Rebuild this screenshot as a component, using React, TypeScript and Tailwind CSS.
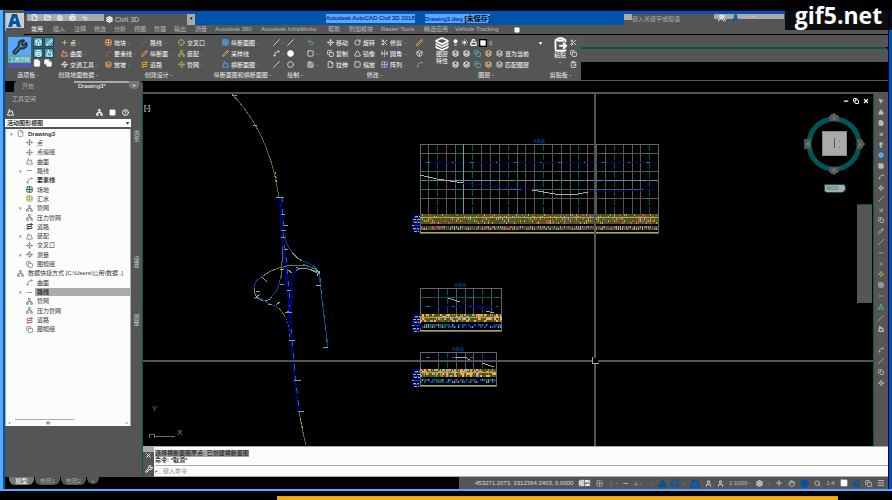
import {useState} from 'react';
import {
	ArrowDownRight, Box, Circle, CircleHelp, ClipboardPaste, Copy, Crosshair, Eraser, File, FlipHorizontal2, FolderOpen,
	Grid2x2, Hand, Layers, Lightbulb, LockOpen, Menu, Minus, Mountain, Move, MousePointer2, Network, Pencil, Plus, Printer,
	Route, RotateCw, Save, Scissors, Search, Settings, Slash, Spline, Square, Sun, Table, Triangle, Undo2, Users, User,
	Waypoints, Wrench, X,
} from 'lucide-react';

import type {LucideIcon} from 'lucide-react';

type Tool = {
	icon: LucideIcon;
	label?: string;
	caret?: boolean;
	tint?: string;
};

const menuTabs = [
	{label: '常用', width: 'w-[22px]'},
	{label: '插入', width: 'w-[21px]'},
	{label: '注释', width: 'w-[20px]'},
	{label: '修改', width: 'w-[20px]'},
	{label: '分析', width: 'w-[20px]'},
	{label: '视图', width: 'w-[20px]'},
	{label: '管理', width: 'w-[20px]'},
	{label: '输出', width: 'w-[21px]'},
	{label: '测量', width: 'w-[20px]'},
	{label: 'Autodesk 360', width: 'w-[46px]'},
	{label: 'Autodesk InfraWorks', width: 'w-[67px]'},
	{label: '帮助', width: 'w-[21px]'},
	{label: '附加模块', width: 'w-[32px]'},
	{label: 'Raster Tools', width: 'w-[43px]'},
	{label: '精选应用', width: 'w-[31px]'},
	{label: 'Vehicle Tracking', width: 'w-[59px]'},
];

const groundTools: Tool[] = [
	{icon: Plus, label: '点', caret: true, tint: 'text-[#ffaa55]'},
	{icon: Mountain, label: '曲面', caret: true, tint: 'text-[#ffaa55]'},
	{icon: Waypoints, label: '交通工具', caret: true},
];

const parcelTools: Tool[] = [
	{icon: Grid2x2, label: '地块', caret: true, tint: 'text-[#ffaa55]'},
	{icon: Spline, label: '要素线', caret: true, tint: 'text-[#aa5555]'},
	{icon: Layers, label: '放坡', caret: true, tint: 'text-[#ffaa55]'},
];

const alignmentTools: Tool[] = [
	{icon: Slash, label: '路线', caret: true, tint: 'text-[#aa5555]'},
	{icon: Pencil, label: '纵断面', caret: true, tint: 'text-[#ffaa55]'},
	{icon: Route, label: '道路', tint: 'text-[#ffaa00]'},
];

const assemblyTools: Tool[] = [
	{icon: Crosshair, label: '交叉口', caret: true, tint: 'text-[#aaaa55]'},
	{icon: Network, label: '装配', caret: true, tint: 'text-[#aaaa55]'},
	{icon: Waypoints, label: '管网', caret: true, tint: 'text-[#aaaa55]'},
];

const sectionTools: Tool[] = [
	{icon: Table, label: '纵断面图', caret: true, tint: 'text-[#55aaff]'},
	{icon: Pencil, label: '采样线', tint: 'text-[#ffaa55]'},
	{icon: Mountain, label: '横断面图', caret: true, tint: 'text-[#55aaff]'},
];

const moveTools: Tool[] = [
	{icon: Move, label: '移动'},
	{icon: Copy, label: '复制'},
	{icon: File, label: '拉伸'},
];

const rotateTools: Tool[] = [
	{icon: RotateCw, label: '旋转'},
	{icon: Triangle, label: '镜像'},
	{icon: Square, label: '缩放'},
];

const trimTools: Tool[] = [
	{icon: Scissors, label: '修剪', caret: true},
	{icon: FlipHorizontal2, label: '圆角', caret: true},
	{icon: Grid2x2, label: '阵列', caret: true, tint: 'text-[#aaaaff]'},
];

const eraseTools: Tool[] = [
	{icon: Pencil, tint: 'text-[#ffaa55]'},
	{icon: Box},
	{icon: Spline, tint: 'text-[#55aaaa]'},
];

const treeItems = [
	{label: 'Drawing3', level: 0, icon: File, open: true, bold: true},
	{label: '点', level: 1, icon: Move},
	{label: '点编组', level: 1, icon: Move},
	{label: '曲面', level: 1, icon: Mountain},
	{label: '路线', level: 1, icon: Minus, open: true},
	{label: '要素线', level: 1, icon: Spline, bold: true},
	{label: '场地', level: 1, icon: Grid2x2, tint: 'text-[#005555]'},
	{label: '汇水', level: 1, icon: Table, tint: 'text-[#aaaa55]'},
	{label: '管网', level: 1, icon: Network, open: true},
	{label: '压力管网', level: 1, icon: Network},
	{label: '道路', level: 1, icon: Route, tint: 'text-[#222222]'},
	{label: '装配', level: 1, icon: Mountain, open: true},
	{label: '交叉口', level: 1, icon: Move},
	{label: '测量', level: 1, icon: Waypoints, open: true},
	{label: '图幅组', level: 1, icon: Copy},
	{label: '数据快捷方式 [C:\\Users\\公用\\数据..]', level: 0, icon: Network},
	{label: '曲面', level: 1, icon: Spline},
	{label: '路线', level: 1, icon: Minus, open: true},
	{label: '管网', level: 1, icon: Network},
	{label: '压力管网', level: 1, icon: Network},
	{label: '道路', level: 1, icon: Route, tint: 'text-[#aa5555]'},
	{label: '图幅组', level: 1, icon: Copy},
];

const selectedRow = 17;

const sideTools: Array<{icon: LucideIcon; tint?: string}> = [
	{icon: MousePointer2}, {icon: Triangle}, {icon: File}, {icon: ArrowDownRight}, {icon: Lightbulb},
	{icon: Box, tint: 'text-[#55aaff]'}, {icon: Square}, {icon: Spline}, {icon: Waypoints}, {icon: Slash},
	{icon: ArrowDownRight}, {icon: Copy}, {icon: Pencil, tint: 'text-[#ffaa55]'}, {icon: Slash}, {icon: Minus},
	{icon: Plus, tint: 'text-[#aaaa55]'}, {icon: Waypoints, tint: 'text-[#aaaa55]'}, {icon: Table}, {icon: Minus},
	{icon: Network, tint: 'text-[#55aaaa]'}, {icon: Slash}, {icon: Mountain, tint: 'text-white'}, {icon: Minus, tint: 'text-[#aa5555]'},
	{icon: Spline}, {icon: Slash}, {icon: Copy}, {icon: Waypoints},
];

const bandColors = ['#aaaa55', '#aaaaaa', '#555555', '#aa5555', '#555555', '#555500'];
const blueBandColors = ['#0055aa', '#555555', '#55aaaa', '#000055', '#005555', '#000055'];
const warmBandColors = ['#aaaa55', '#555555', '#aaaa55', '#aa5555', '#aaaaaa', '#ffaa55'];

// Small deterministic generator, so the bands look the same on each render
function noise(seed: number) {
	const value = Math.sin(seed * 12.9898) * 43758.5453;
	return value - Math.floor(value);
}

function ToolButton({icon: Icon, label, caret, tint = 'text-[#dddddd]'}: Tool) {
	return (
		<button type="button" aria-label={label ?? 'tool'} className="flex h-[11px] items-center gap-0.5 whitespace-nowrap text-white">
			<Icon size={7} strokeWidth={3} className={`shrink-0 ${tint}`}/>
			{label && <span>{label}</span>}
			{caret && <span className="text-[#aaaaaa]">-</span>}
		</button>
	);
}

function ToolColumn({tools, width}: {tools: Tool[]; width: string}) {
	return (
		<div className={`flex shrink-0 flex-col ${width}`}>
			{tools.map((tool, i) => <ToolButton key={i} {...tool}/>)}
		</div>
	);
}

function Panel({title, width, children}: {title: string; width: string; children: React.ReactNode}) {
	return (
		<section className={`flex shrink-0 flex-col ${width}`}>
			<div className="flex h-[35px] items-start pt-0.5">{children}</div>
			<button type="button" className="flex h-[10px] justify-center whitespace-nowrap pr-2.5 leading-[10px] text-[#eeeeee]">{title} -</button>
		</section>
	);
}

function Header() {
	return (
		<header className="flex shrink-0 bg-[#555555]">
			<button type="button" aria-label="应用程序菜单" className="mt-[3px] flex h-[18px] w-[19px] shrink-0 items-center justify-center bg-[#aaaaaa]">
				<svg viewBox="0 0 18 18" className="h-[18px] w-[18px]">
					<path d="M0 0h18v15H0z" fill="#cccccc"/>
					<path d="M0 15h18v3H0z" fill="#555555"/>
					<path d="M2 14 6 1h5l4 13h-4l-1-3H7l-1 3zM7 8h3L9 4z" fill="#0055aa" fillRule="evenodd"/>
				</svg>
			</button>
			<div className="flex min-w-0 flex-1 flex-col">
				<div className="flex h-[15px] justify-between border-t border-[#000055] bg-[#0055aa]">
					<div className="flex h-[14px] w-[302px] shrink-0 pt-[3px]">
						<div className="flex h-[11px] w-[80px] shrink-0 items-start bg-[#555555] pl-[3px]">
							<div className="flex h-[7px] flex-1 items-center gap-1.5 bg-[#aaaaaa] pl-1 text-white">
								<File size={7} strokeWidth={3}/>
								<FolderOpen size={7} strokeWidth={3}/>
								<Save size={6} strokeWidth={3}/>
								<Printer size={7} strokeWidth={3}/>
								<Undo2 size={6} strokeWidth={3}/>
							</div>
						</div>
						<button type="button" className="flex h-[11px] w-[83px] shrink-0 items-center gap-0.5 bg-[#555555] pl-0.5 text-[7px] text-[#cccccc]">
							<Settings size={7} strokeWidth={4} className="text-white"/>
							Civil 3D
						</button>
						<div className="h-[11px] w-2 shrink-0 bg-[#aaaaaa] text-center text-[5px] text-black">▾</div>
					</div>
					<h1 className="flex shrink-0 items-center gap-2.5 text-[#000055]">
						<span className="h-[9px] bg-[#55aaff] leading-[9px]">Autodesk AutoCAD Civil 3D 2018</span>
						<span className="h-[9px] bg-[#55aaff] leading-[9px]">Drawing3.dwg <b className="text-[7px] text-black">[未保存]</b></span>
					</h1>
					<div className="flex min-w-0 flex-1 justify-end pt-[3px]">
						<div className="flex h-[11px] w-[90px] shrink-0 bg-[#555555]">
							<div className="h-[6px] w-2 bg-[#aaaaaa]"/>
							<input aria-label="搜索" placeholder="键入关键字或短语" className="h-[9px] min-w-0 flex-1 bg-[#555555] text-[6px] outline-none placeholder:text-[#aaaaaa]"/>
						</div>
						<div className="flex h-[11px] w-[174px] shrink-0 bg-[#555555]">
							<div className="flex h-[5px] w-[70px] gap-1.5 bg-[#aaaaaa] pl-1">
								<Users size={8} strokeWidth={3} className="text-white"/>
								<User size={7} strokeWidth={5} className="text-[#0055aa]"/>
								<span className="leading-[4px] text-white">· · -</span>
							</div>
						</div>
					</div>
				</div>
				<nav className="flex h-[10px] items-center border-b border-black pl-[7px] leading-[9px] text-[#bbbbbb]">
					{menuTabs.map((tab, i) => (
						<button
							key={tab.label}
							type="button"
							className={`h-[9px] shrink-0 whitespace-nowrap text-left leading-[9px] ${tab.width} ${i === 0 ? 'text-white' : ''}`}
						>
							{tab.label}
						</button>
					))}
					<Square size={6} fill="white" className="text-white"/>
				</nav>
			</div>
		</header>
	);
}

function Ribbon() {
	return (
		<div className="flex h-[46px] shrink-0 border-b border-[#555555] bg-black">
			<div className="flex shrink-0 bg-[#555555]">
				<Panel title="选项板" width="w-[56px]">
					<button type="button" className="ml-[3px] flex h-[31px] w-[23px] shrink-0 flex-col items-center bg-[#55aaff] pt-0.5 leading-[8px] text-white">
						<Wrench size={16} strokeWidth={3} className="shrink-0 text-[#333333]"/>
						<span className="w-full whitespace-nowrap bg-[#55aaaa] text-[5px]">工具空间</span>
						<span className="min-h-0 w-full flex-1 bg-[#5555aa]"/>
					</button>
					<div className="ml-[2px] grid grid-cols-2 gap-px">
						{[Box, Pencil, Printer, Mountain].map((Icon, i) => (
							<button key={i} type="button" aria-label="面板" className="flex h-[10px] w-[10px] items-center justify-center border border-[#005555] bg-[#5599bb] text-white">
								<Icon size={7} strokeWidth={3}/>
							</button>
						))}
						<File size={8} fill="white" className="text-white"/>
						<Copy size={8} fill="white" className="text-white"/>
					</div>
				</Panel>
				<Panel title="创建地面数据" width="w-[44px]">
					<ToolColumn tools={groundTools} width="w-[44px]"/>
				</Panel>
				<Panel title="创建设计" width="w-[117px]">
					<ToolColumn tools={parcelTools} width="w-[36px]"/>
					<ToolColumn tools={alignmentTools} width="w-[37px]"/>
					<ToolColumn tools={assemblyTools} width="w-[44px]"/>
				</Panel>
				<Panel title="纵断面图和横断面图" width="w-[51px]">
					<ToolColumn tools={sectionTools} width="w-[51px]"/>
				</Panel>
				<Panel title="绘制" width="w-[54px]">
					<ToolColumn tools={[{icon: Slash, caret: true}, {icon: Spline, caret: true}, {icon: Slash, caret: true}]} width="w-[14px]"/>
					<ToolColumn tools={[{icon: Slash}, {icon: Circle, tint: 'fill-white text-white'}, {icon: Circle}]} width="w-[20px]"/>
					<ToolColumn tools={[{icon: Undo2, tint: 'text-[#55aaaa]'}, {icon: Square, caret: true}, {icon: Save, caret: true}]} width="w-[20px]"/>
				</Panel>
				<Panel title="修改" width="w-[105px]">
					<ToolColumn tools={moveTools} width="w-[27px]"/>
					<ToolColumn tools={rotateTools} width="w-[27px]"/>
					<ToolColumn tools={trimTools} width="w-[35px]"/>
					<ToolColumn tools={eraseTools} width="w-[16px]"/>
				</Panel>
				<Panel title="图层" width="w-[118px]">
					<button type="button" className="flex w-[20px] shrink-0 flex-col items-center leading-[7px] text-white">
						<Layers size={14} strokeWidth={3}/>
						<span>图层</span>
						<span>特性</span>
					</button>
					<div className="flex flex-1 flex-col">
						<div className="flex h-[11px] items-center gap-0.5 pr-2 text-white">
							<Lightbulb size={7} fill="white"/>
							<Sun size={7} fill="white"/>
							<LockOpen size={7} strokeWidth={4}/>
							<Square size={8} fill="white" className="border border-black"/>
							<select aria-label="图层" className="flex-1 appearance-none bg-transparent text-[#cccccc]">
								<option>0</option>
							</select>
							<span>▾</span>
						</div>
						{['置为当前', '匹配图层'].map(label => (
							<div key={label} className="flex h-[11px] items-center gap-1 text-white">
								<Layers size={7} strokeWidth={3}/>
								<Layers size={7} strokeWidth={3}/>
								<Copy size={7} strokeWidth={3} className="text-[#55aaaa]"/>
								<Layers size={7} strokeWidth={3} className="text-[#ffcc88]"/>
								<ToolButton icon={Layers} label={label}/>
							</div>
						))}
					</div>
				</Panel>
				<Panel title="剪贴板" width="w-[31px]">
					<button type="button" className="flex w-[20px] shrink-0 flex-col items-center leading-[7px] text-white">
						<ClipboardPaste size={15} strokeWidth={3}/>
						<span>粘贴</span>
						<span>-</span>
					</button>
					<ToolColumn tools={[{icon: Scissors}, {icon: Copy}, {icon: ClipboardPaste}]} width="w-[10px]"/>
				</Panel>
			</div>
			<div className="flex min-w-0 flex-1 flex-col">
				<div className="h-[12px] bg-[#555555]"/>
				<div className="h-[15px] rounded-tr border-t-2 border-[#005555] bg-[#555555]"/>
			</div>
		</div>
	);
}

function DocumentTabs() {
	return (
		<div className="flex h-[11px] shrink-0 items-stretch bg-black">
			<div className="ml-[9px] h-full w-[60px] rounded-tl bg-[#555555] pl-2">
				<button type="button" className="block leading-[11px] text-[#aaaaaa]">开始</button>
			</div>
			<div className="flex w-[69px] rounded-tr bg-[#555555]">
				<button type="button" className="h-[8px] w-[55px] border-t-2 border-[#aaaaaa] pl-1 text-left leading-[7px] text-white">Drawing3*</button>
				<button type="button" aria-label="新图形" className="h-[8px] w-[10px] rounded-b bg-[#777777] leading-[7px] text-white">+</button>
			</div>
		</div>
	);
}

function Toolspace() {
	const [selected, setSelected] = useState(selectedRow);

	return (
		<aside className="flex w-[138px] shrink-0 border-r border-[#005555] bg-[#555555]">
			<div className="flex w-[126px] shrink-0 flex-col">
				<h2 className="mt-0.5 h-[11px] pl-[7px] leading-[11px] text-[#bbbbbb]">工具空间</h2>
				<div className="flex h-[14px] items-center gap-[6px] px-0.5 text-white">
					<Mountain size={7} strokeWidth={3} className="mr-auto"/>
					<Network size={7} strokeWidth={3}/>
					<Square size={7} fill="white"/>
					<CircleHelp size={7} strokeWidth={3}/>
				</div>
				<div className="flex h-[8px] shrink-0 items-center bg-white pr-0.5 text-[#333333]">
					<select aria-label="视图" className="h-[8px] min-w-0 flex-1 appearance-none bg-white pl-0.5 text-[6px] font-bold leading-[8px]">
						<option>活动图形视图</option>
					</select>
					<span>▾</span>
				</div>
				<div className="mt-0.5 flex h-[297px] flex-col border-x border-[#aaaaaa] bg-[#fcfcfc] text-[#333333]">
					<ul className="grid h-[205px] auto-rows-fr grid-cols-1">
						{treeItems.map(({label, level, icon: Icon, open, bold, tint}, i) => (
							<li key={i} className={`flex min-w-0 items-center ${level === 0 ? 'pl-1' : 'pl-[13px]'}`}>
								<span className="w-[7px] shrink-0 text-[5px] text-[#888888]">{open ? '▾' : ''}</span>
								<Icon size={7} strokeWidth={3} className={`shrink-0 ${tint ?? 'text-[#888888]'}`}/>
								<button
									type="button"
									className={`ml-0.5 h-[8px] min-w-0 flex-1 whitespace-nowrap pl-0.5 text-left leading-[8px] ${i === selected ? 'bg-[#aaaaaa] font-bold' : ''} ${bold ? 'font-bold' : ''}`}
									onClick={() => {
										setSelected(i);
									}}
								>
									{label}
								</button>
							</li>
						))}
					</ul>
					<div className="ml-[9px] mt-auto h-px w-[59px] bg-[#aaaaaa]"/>
					<div className="flex h-[6px] items-center justify-between px-0.5 text-[4px] text-[#888888]">
						<span>◂</span>
						<span className="mr-[40px]">▮▮</span>
						<span>▸</span>
					</div>
				</div>
			</div>
			<div className="flex flex-1 flex-col items-center text-[6px] leading-[6px] text-[#cccccc]">
				<button type="button" className="mt-[37px] h-[13px] w-[6px]">浏览</button>
				<button type="button" className="mt-[113px] h-[13px] w-[6px]">设置</button>
				<button type="button" className="mt-[45px] h-[13px] w-[6px]">测量</button>
			</div>
		</aside>
	);
}

type ProfileProps = {
	x: number;
	top: number;
	bands: number;
	width: number;
	columns: number[];
	rows: Array<{y: number; color: string}>;
	upper: string[];
	lower: string[];
	upperHeight: number;
};

function ProfileView({x, top, bands, width, columns, rows, upper, lower, upperHeight}: ProfileProps) {
	const lowerTop = bands + upperHeight + 2;
	const cells = [];
	for (let row = 0; row < upperHeight; row += 2) {
		for (let col = 0; col < width; col += 2) {
			const pick = noise((col * 7) + (row * 131) + top);
			if (pick > 0.15) {
				cells.push(<rect key={`u${row}-${col}`} x={x + col} y={bands + row} width={pick > 0.6 ? 2 : 1} height="2" fill={upper[Math.floor(pick * upper.length)]}/>);
			}
		}
	}

	for (let row = 0; row < 4; row += 2) {
		for (let col = 0; col < width; col += 2) {
			const pick = noise((col * 5) + (row * 57) + bands);
			cells.push(<rect key={`l${row}-${col}`} x={x + col} y={lowerTop + row} width={pick > 0.5 ? 2 : 1} height="2" fill={lower[Math.floor(pick * lower.length)]}/>);
		}
	}

	return (
		<g>
			<text x={x + (width / 2)} y={top - 1} textAnchor="middle" fontSize="4" fill="#0055aa">纵断面</text>
			{columns.map((column, i) => (
				<path
					key={column}
					d={`M${column} ${top}V${bands}`}
					stroke={i % 4 === 1 ? '#005555' : '#555555'}
					strokeDasharray={i % 4 === 1 ? '7 2' : undefined}
				/>
			))}
			{rows.map(row => (
				<g key={row.y}>
					<path d={`M${x} ${row.y}H${x + width}`} stroke={row.color}/>
					<path d={`M${x + 6} ${row.y}H${x + width}`} stroke="#008888" strokeDasharray="4 22 2 16"/>
				</g>
			))}
			<path d={`M${x} ${top}H${x + width}V${lowerTop + 7}H${x}Z`} fill="none" stroke="#666666"/>
			<rect x={x} y={bands} width={width} height={upperHeight} fill="#555500"/>
			<rect x={x} y={lowerTop} width={width} height="4" fill="#333333"/>
			{cells}
			<path d={`M${x} ${bands + 3}H${x + width}M${x} ${lowerTop + 6}H${x + width}`} stroke="#aaaa55"/>
			<rect x={x - 8} y={bands} width="8" height={lowerTop + 7 - bands} fill="#000055"/>
			<path d={`M${x - 5} ${bands + 2}h5m-7 3h7m-6 3h6m-8 3h7m-6 3h6m-5 3h5`} stroke="#aaaaaa" strokeDasharray="3 1"/>
			<path d={`M${x - 6} ${bands + 3}h6m-7 4h6m-5 4h6m-7 4h6`} stroke="#0055aa"/>
		</g>
	);
}

const mainColumns = Array.from({length: 26}, (_, i) => Math.round(428 + (i * 8.85)));

function Drawing() {
	return (
		<svg viewBox="143 94 730 352" className="h-[352px] w-[730px] max-w-none shrink-0" fill="none" strokeWidth="1" shapeRendering="crispEdges">
			<g strokeWidth="1">
				<path d="M232 94Q265 129 275 177L279 197M299 412Q302 430 306 445" stroke="#66661a"/>
				<path d="M232 94l5 5M275 172l2 10M300 418l3 12" stroke="#aaaa55" strokeDasharray="2 2"/>
				<path d="M281 197L283 237L288 290L291 340L295 380L299 412" stroke="#000077" strokeWidth="2"/>
				<path d="M282 197L284 237L289 290L292 340L296 380L299 412" stroke="#0077aa" strokeDasharray="5 7"/>
				<path d="M279 197L282 237L286 290" stroke="#000066"/>
				<path d="M285 235Q286 246 292 252" stroke="#004499"/>
				<path d="M292 252Q296 258 302 261" stroke="#888888"/>
				<path d="M302 261Q315 264 319 273L322 300L328 347L324 348" stroke="#004499"/>
				<path d="M320 278L323 305L327 345" stroke="#008888" strokeDasharray="4 8"/>
				<path d="M317 270Q306 263 287 266Q272 269 263 276" stroke="#777722"/>
				<path d="M263 276Q254 281 254 288" stroke="#004499"/>
				<path d="M254 288Q254 299 264 301Q270 301 272 296" stroke="#888866"/>
				<path d="M270 298Q279 292 281 275" stroke="#004499"/>
				<path d="M281 278L283 247" stroke="#666655"/>
				<path d="M258 297L270 304L277 307" stroke="#004499"/>
				<path d="M277 307Q288 315 290 337" stroke="#66661a"/>
				<path d="M285 316L291 338" stroke="#000077"/>
				<path d="M291 325L292 277Q296 267 306 268" stroke="#000077" strokeWidth="2"/>
				<path d="M296 271Q301 265 317 272" stroke="#999977"/>
				<path d="M303 264L317 270" stroke="#008899"/>
				<path d="M276 197h8M281 214h4M284 225h4M281 230h5M281 237h4M284 249h4M287 290h4M287 312h5M289 340h6M294 380h7M298 411h6M323 347h5M254 299l6-5M256 291h4M268 304h4M276 305l4-3M285 313l4-2M296 267l4 2M311 270l8 4M315 268l5 6M288 270l4 3M280 284h4M253 125h4M232 95h5" stroke="#66aaaa"/>
				<path d="M262 277l5 5M316 285h5M317 276l3-5M284 269h-4" stroke="#aaaaaa"/>
			</g>

			<ProfileView
				x={420} top={144} bands={214} width={238} upperHeight={10}
				columns={mainColumns} upper={bandColors} lower={bandColors}
				rows={[
					{y: 153, color: '#555555'}, {y: 162, color: '#000077'}, {y: 171, color: '#555555'},
					{y: 180, color: '#559999'}, {y: 189, color: '#555555'}, {y: 198, color: '#555555'},
				]}
			/>
			<path d="M463 144V214" stroke="#55aaaa"/>
			<path d="M420 175L437 179L463 183" stroke="#aaaaaa"/>
			<path d="M463 183L509 188L532 190" stroke="#000088"/>
			<path d="M532 190L555 194L578 194L588 192" stroke="#aaaaaa"/>
			<path d="M588 192L628 191L658 189" stroke="#000077"/>

			<ProfileView
				x={420} top={288} bands={314} width={81} upperHeight={8}
				columns={[438, 447, 456, 465, 473, 482, 491]} upper={warmBandColors} lower={blueBandColors}
				rows={[{y: 297, color: '#005555'}, {y: 306, color: '#000077'}]}
			/>
			<path d="M448 298l12 4M486 311l8 2" stroke="#aaaaaa"/>
			<path d="M460 302L486 311" stroke="#000077"/>

			<ProfileView
				x={420} top={352} bands={369} width={76} upperHeight={8}
				columns={[438, 447, 456, 465, 473, 482]} upper={warmBandColors} lower={blueBandColors}
				rows={[{y: 357, color: '#000055'}]}
			/>
			<path d="M455 357h10l5 3M482 363l12 4" stroke="#aaaaaa"/>

			<path d="M595 94V358M595 364V446M143 361H592M598 361H873" stroke="#555555" strokeWidth="2"/>
			<path d="M592 357v6h7" stroke="#aaaaaa"/>

			<text x="152" y="411" fontSize="8" fill="#777777">Y</text>
			<text x="177" y="435" fontSize="8" fill="#779999">X</text>
			<path d="M149 438v-4h5v4M155 436h20" stroke="#557777"/>
			<text x="144" y="110" fontSize="7" fill="white">[-]</text>

			<circle cx="834" cy="144" r="25" stroke="#005555" strokeWidth="5" shapeRendering="auto"/>
			<path d="M829 121v-5l5-3 5 3v5zM829 167v5l5 3 5-3v-5zM811 139h-7v10h7zM857 139h5l3 5-3 5h-5z" fill="#555555"/>
			<g fontSize="4" fill="#55aaaa" textAnchor="middle">
				<text x="834" y="120">北</text>
				<text x="834" y="172">南</text>
				<text x="808" y="146">西</text>
				<text x="860" y="146">东</text>
			</g>
			<path d="M822 131h24v24h-24z" fill="#aaaaaa" stroke="#888888"/>
			<path d="M834 138v10M839 141v1M839 147v1" stroke="#555555" strokeWidth="1"/>
			<rect x="824" y="184" width="21" height="8" rx="2" fill="#aaaaaa" stroke="#005555"/>
			<text x="826" y="190" fontSize="5" fill="#008888">WCS</text>
		</svg>
	);
}

function Workspace() {
	return (
		<main className="relative flex min-w-0 flex-1 overflow-hidden bg-black">
			<Drawing/>
			<div className="absolute right-1 top-1 flex gap-1 text-white">
				<button type="button" aria-label="最小化"><Minus size={6} strokeWidth={5}/></button>
				<button type="button" aria-label="还原"><Copy size={6} strokeWidth={4}/></button>
				<button type="button" aria-label="关闭"><X size={6} strokeWidth={5}/></button>
			</div>
			<div className="absolute right-px top-[110px] h-[99px] w-[15px] border-t border-[#005555] bg-[#555555]"/>
		</main>
	);
}

function SideToolbar() {
	return (
		<div className="w-[15px] shrink-0 border-l border-[#005555] bg-[#555555] pt-[2px]">
			<div className="grid h-[292px] auto-rows-fr justify-items-center">
				{sideTools.map(({icon: Icon, tint}, i) => (
					<button key={i} type="button" aria-label="绘图工具" className={tint ?? 'text-[#bbbbbb]'}>
						<Icon size={6} strokeWidth={3} fill={i < 7 ? 'currentColor' : 'none'}/>
					</button>
				))}
			</div>
		</div>
	);
}

function CommandLine() {
	return (
		<div className="flex h-[31px] shrink-0 bg-[#fcfcfc]">
			<div className="flex w-[11px] shrink-0 flex-col items-center justify-between border-t-[6px] border-[#aaaaaa] bg-[#555555] pb-1 text-white">
				<X size={7} strokeWidth={3}/>
				<Wrench size={8} strokeWidth={3}/>
			</div>
			<div className="flex min-w-0 flex-1 flex-col border-y border-[#aaaaaa] pl-px text-[#333333]">
				<div className="flex h-[19px] flex-col items-start border-b border-[#aaaaaa] pt-[3px] leading-[7px]">
					<p className="h-[7px] whitespace-nowrap bg-[#aaaaaa] font-bold">选择横断面图原点: 已创建横断面图</p>
					<p className="font-bold">命令: *取消*</p>
				</div>
				<input aria-label="命令" placeholder="▸_ 键入命令" className="h-[10px] bg-transparent text-[6px] outline-none placeholder:text-[#888888]"/>
			</div>
		</div>
	);
}

function StatusBar() {
	return (
		<footer className="flex h-[12px] shrink-0 justify-between bg-black">
			<div className="flex items-start gap-px pl-1">
				<button type="button" className="h-[8px] w-[25px] rounded-b-md bg-[#777777] leading-[8px] text-white">模型</button>
				<button type="button" className="h-[8px] w-[25px] rounded-b-md bg-[#555555] leading-[8px] text-[#aaaaaa]">布局1</button>
				<button type="button" className="h-[8px] w-[25px] rounded-b-md bg-[#555555] leading-[8px] text-[#aaaaaa]">布局2</button>
				<button type="button" aria-label="新布局" className="h-[7px] w-[12px] rounded-b-md bg-[#555555] leading-[6px] text-[#aaaaaa]">+</button>
			</div>
			<div className="flex w-[429px] items-center justify-between bg-[#555555] pl-4 pr-[3px] text-[#bbbbbb]">
				<span className="whitespace-nowrap text-[#dddddd]">453271.2073, 3312394.2403, 0.0000</span>
				<button type="button" className="font-bold text-white">模型</button>
				<Grid2x2 size={7}/>
				<span>⋮ -</span>
				<Minus size={7} strokeWidth={3}/>
				<span>⟂ -</span>
				<span>· -</span>
				<span className="flex items-center gap-1 text-[#0055aa]">
					<Triangle size={9} fill="currentColor" stroke="#005555"/>
					<Square size={8} strokeWidth={5}/>
					<span className="text-[#bbbbbb]">-</span>
				</span>
				<Mountain size={10} strokeWidth={5} className="text-[#0055aa]"/>
				<User size={7} strokeWidth={4}/>
				<User size={7} strokeWidth={4}/>
				<button type="button" className="whitespace-nowrap">1:1000 -</button>
				<Settings size={7} strokeWidth={5}/>
				<span>-</span>
				<Plus size={8} strokeWidth={3}/>
				<Hand size={7} strokeWidth={3}/>
				<Circle size={9} fill="currentColor" className="text-[#0055aa]"/>
				<Search size={7} strokeWidth={3}/>
				<span>1:4</span>
				<Square size={8} fill="white" className="text-white"/>
				<Eraser size={7} strokeWidth={5} className="text-[#0055aa]"/>
				<Copy size={7} strokeWidth={3}/>
				<Menu size={8} strokeWidth={3}/>
			</div>
		</footer>
	);
}

export default function App() {
	return (
		<div className="relative flex h-screen flex-col overflow-hidden bg-black pt-[10px] font-['Liberation_Sans','Noto_Sans_CJK_SC',sans-serif] text-[6px] leading-[8px]">
			<div className="flex min-h-0 flex-1 border-b-2 border-l-[3px] border-[#55aaff]">
				<div className="flex min-w-0 flex-1 flex-col border-l-2 border-r-[3px] border-[#0055aa]">
					<div className="flex min-h-0 flex-1 flex-col border-r border-[#000055]">
						<Header/>
						<Ribbon/>
						<DocumentTabs/>
						<div className="flex min-h-0 flex-1">
							<Toolspace/>
							<div className="flex min-w-0 flex-1 flex-col border-t-2 border-[#555555]">
								<div className="flex min-h-0 flex-1">
									<Workspace/>
									<SideToolbar/>
								</div>
								<CommandLine/>
							</div>
						</div>
						<StatusBar/>
					</div>
				</div>
			</div>
			<div className="flex h-[9px] shrink-0 pt-[5px]">
				<div className="ml-[31%] mr-[6%] flex-1 border-t border-[#aaaa55] bg-[#ffaa00]"/>
			</div>
			<div className="absolute right-0 top-0 flex h-[30px] w-[107px] items-center justify-center bg-black/85 font-['Open_Sans',sans-serif] text-[23px] font-bold leading-[30px] text-white">
				gif5.net
			</div>
		</div>
	);
}
